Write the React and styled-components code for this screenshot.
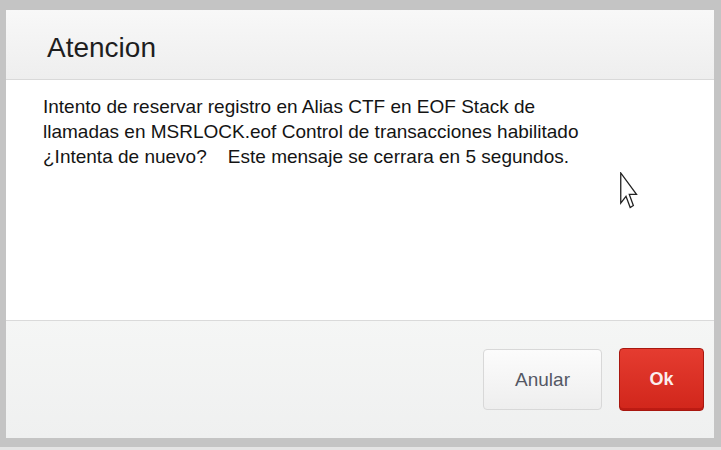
import React from "react";
import styled, { createGlobalStyle } from "styled-components";

const Global = createGlobalStyle`
  html, body { margin: 0; padding: 0; }
  body {
    background: #e6e6e6;
    font-family: "Liberation Sans", Arial, sans-serif;
  }
`;

const Frame = styled.div`
  width: 721px;
  height: 450px;
  box-sizing: border-box;
  background: linear-gradient(#c4c4c4, #c4c4c4) top / 100% 447px no-repeat, #e4e4e4;
  padding: 10px 7px 12px 6px;
  position: relative;
`;

const Dialog = styled.div`
  width: 708px;
  height: 428px;
  display: flex;
  flex-direction: column;
  background: #fff;
  box-shadow: inset 0 0 0 1px #dcdcdc;
`;

const Header = styled.div`
  height: 70px;
  box-sizing: border-box;
  padding: 22px 0 0 41px;
  background: linear-gradient(#f8f8f8, #eeeeee);
  border-bottom: 1px solid #d9d9d9;
`;

const Title = styled.h1`
  margin: 0;
  font-size: 28px;
  font-weight: normal;
  color: #1e1e1e;
  line-height: 32px;
`;

const Body = styled.div`
  flex: 1;
  padding: 14px 20px 0 37px;
  background: #fff;
`;

const Line = styled.div`
  font-size: 19px;
  line-height: 25px;
  color: #141414;
  white-space: pre;
`;

const Footer = styled.div`
  height: 118px;
  box-sizing: border-box;
  border-top: 1px solid #dadada;
  background: linear-gradient(#f5f6f5, #eff0f0);
  display: flex;
  justify-content: flex-end;
  align-items: center;
  gap: 17px;
  padding: 0 10px 0 0;
`;

const Button = styled.button`
  height: ${(p) => (p.$primary ? "63px" : "61px")};
  width: ${(p) => p.$w}px;
  border-radius: 4px;
  font-family: "Liberation Sans", Arial, sans-serif;
  font-size: ${(p) => (p.$primary ? "18px" : "19px")};
  font-weight: ${(p) => (p.$primary ? "bold" : "normal")};
  cursor: default;
  border: 1px solid ${(p) => (p.$primary ? "#a8170f" : "#d8d8d8")};
  color: ${(p) => (p.$primary ? "#fbeeee" : "#545864")};
  background: ${(p) =>
    p.$primary
      ? "linear-gradient(#e53c30, #d1261b)"
      : "linear-gradient(#fcfcfc, #eeeeee)"};
  box-shadow: ${(p) =>
    p.$primary ? "inset 0 -2px 0 rgba(150,10,5,0.35)" : "none"};
`;

const Cursor = styled.svg`
  position: absolute;
  left: 620px;
  top: 172px;
`;

export default function App() {
  return (
    <>
      <Global />
      <Frame>
        <Dialog>
          <Header>
            <Title>Atencion</Title>
          </Header>
          <Body>
            <Line>Intento de reservar registro en Alias CTF en EOF Stack de</Line>
            <Line>llamadas en MSRLOCK.eof Control de transacciones habilitado</Line>
            <Line>{"¿Intenta de nuevo?    Este mensaje se cerrara en 5 segundos."}</Line>
          </Body>
          <Footer>
            <Button $w={119}>Anular</Button>
            <Button $w={85} $primary>Ok</Button>
          </Footer>
        </Dialog>
        <Cursor width="18" height="37" viewBox="0 0 12 19" preserveAspectRatio="none">
          <path
            d="M0.5 0.5 L0.5 16 L4 12.5 L6.8 18.2 L8.9 17.2 L6.2 11.5 L11 11.5 Z"
            fill="#fff"
            stroke="#222"
            strokeWidth="1.3"
            vectorEffect="non-scaling-stroke"
            strokeLinejoin="miter"
          />
        </Cursor>
      </Frame>
    </>
  );
}
